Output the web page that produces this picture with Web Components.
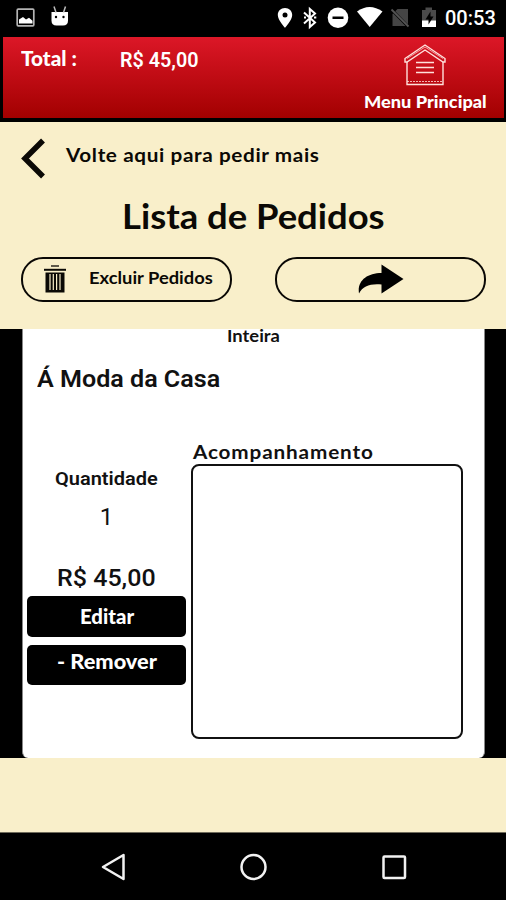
<!DOCTYPE html>
<html lang="pt-BR">
<head>
<meta charset="utf-8">
<title>Lista de Pedidos</title>
<style>
html, body {
    margin: 0;
    height: 100%;
    background: #000;
    overflow: hidden;
}
</style>
</head>
<body>
<pedidos-app></pedidos-app>

<script>
function make_shadow(el, html){
    const tpl = document.createElement("template");
    tpl.innerHTML = html;
    const shadow = el.attachShadow({mode:"open"});
    shadow.appendChild(tpl.content.cloneNode(true));
    return shadow;
}

// text label that fills "width": part by stretching, the rest by letter spacing
customElements.define("fit-label", class FitLabel extends HTMLElement {
    constructor(){
        super();
        this.shadow = make_shadow(this, `
            <style>
            :host {
                display: block;
                font-family: Lato, "Liberation Sans", sans-serif;
                font-weight: 700;
                white-space: nowrap;
            }
            :host([roboto]) { font-family: Roboto, "Liberation Sans", sans-serif; font-weight: 500; }
            :host([heavy]) { font-weight: 900; }
            span { display: inline-block; vertical-align: top; transform-origin: 0 50%; }
            </style>
            <span><slot></slot></span>
        `);
    }

    connectedCallback(){
        const span = this.shadow.querySelector("span");
        const width = parseFloat(this.getAttribute("width"));
        this.style.fontSize = this.getAttribute("size") + "px";
        this.style.lineHeight = this.getAttribute("line") + "px";
        if(!width) return;
        const natural = span.offsetWidth;
        const scale = Math.min(1.09, Math.max(0.94, width / natural));
        const count = this.textContent.length - 1;
        const spacing = (width / scale - natural) / count;
        span.style.letterSpacing = spacing + "px";
        span.style.width = width + "px";
        span.style.transform = `scaleX(${scale})`;
    }
});

customElements.define("status-bar", class StatusBar extends HTMLElement {
    constructor(){
        super();
        make_shadow(this, `
            <style>
            :host {
                display: flex;
                justify-content: space-between;
                height: 37px;
                background: #000;
                color: #fff;
            }
            .clock { margin: 6px 0 0 4px; }
            div { display: flex; }
            .right { padding-right: 10px; }
            svg { display: block; }
            </style>
            <svg width="80" height="37" viewBox="0 0 80 37">
                <rect x="17.2" y="9.2" width="16.6" height="16.6" rx="1" fill="none" stroke="#b4b4b4" stroke-width="1.7"/>
                <path d="M19 23.5v-4l4-2.5 3 2.5 3-1.7 3.500 3v2.700z" fill="#fff"/>
                <path d="M51.500 12h16.500v8.500q0 5-5 5h-6.500q-5 0-5-5z" fill="#fff"/>
                <path d="M54 6.500l2 6M65.500 6.500l-2 6" stroke="#bbb" stroke-width="1.500"/>
                <circle cx="56" cy="17" r="1.200"/><circle cx="63.500" cy="17" r="1.200"/>
            </svg>
            <div class="right">
                <svg width="165" height="37" viewBox="276 0 165 37">
                    <path d="M285 8c-4.200 0-7.200 3-7.200 7 0 5.200 7.200 12.800 7.200 12.800s7.200-7.600 7.200-12.800c0-4-3-7-7.200-7z" fill="#fff"/>
                    <circle cx="285" cy="15" r="2.500"/>
                    <path d="M304 12.500l11 10-5.200 4.500v-18l5.200 4.500-11 10" fill="none" stroke="#fff" stroke-width="2"/>
                    <path d="M304 17.500h2M314 17.500h2.300" stroke="#fff" stroke-width="2"/>
                    <circle cx="338" cy="17.800" r="10.300" fill="#fff"/>
                    <rect x="332.500" y="16.500" width="11" height="2.500"/>
                    <path d="M357 11.500q12.500-9 25.500 0L369.700 27z" fill="#fff"/>
                    <path d="M397.500 9H408v17h-15.500V14z" fill="#454545"/>
                    <path d="M390.500 8.500l18 18.500" stroke="#000" stroke-width="3"/>
                    <path d="M391.500 9.500l17 17" stroke="#555" stroke-width="1.800"/>
                    <path d="M425.500 7.500h6.500v2.500h4v17h-14V10h3.500z" fill="#4a4a4a"/>
                    <path d="M422 20.500h14V27h-14z" fill="#fff"/>
                    <path d="M430.500 11.500l-5 8h3v5l5-8h-3z"/>
                </svg>
                <fit-label class="clock" roboto size="20" line="24" width="51">00:53</fit-label>
            </div>
        `);
    }
});

customElements.define("total-header", class TotalHeader extends HTMLElement {
    constructor(){
        super();
        make_shadow(this, `
            <style>
            :host {
                display: grid;
                grid-template-columns: 98px 1fr 124px;
                box-sizing: border-box;
                height: 81px;
                margin: 0 2px 4px 3px;
                padding: 0 17px 0 18px;
                color: #fff;
                background: linear-gradient(#dc1727, #a20000);
            }
            .total { padding-top: 8.500px; }
            .value { padding: 11px 0 0 1px; font-weight: 600; }
            .menu { display: flex; flex-direction: column; align-items: center; padding-top: 6px; }
            .menu fit-label { margin-top: 4.500px; }
            svg { display: block; }
            </style>
            <fit-label class="total" heavy size="20" line="24" width="56">Total :</fit-label>
            <fit-label class="value" roboto size="20" line="24" width="79">${this.getAttribute("total")}</fit-label>
            <div class="menu">
                <svg width="42" height="44" viewBox="0 0 42 44" fill="none" stroke="#ffe1dc" stroke-width="1.400">
                    <path d="M1 15.500L21 2l20 13.500v3.500h-2L21 7 3 19H1z"/>
                    <path d="M3 15.500L21 4l18 11.500" stroke-width=".7"/>
                    <path d="M3 19v22.500h36V19"/>
                    <path d="M3 38.500h36" stroke-dasharray="2 1" stroke-width=".8"/>
                    <path d="M12 19.500h18M12 24.500h18M12 29.500h18" stroke-width="1.600"/>
                </svg>
                <fit-label heavy size="17" line="20" width="123">Menu Principal</fit-label>
            </div>
        `);
    }
});

customElements.define("pill-button", class PillButton extends HTMLElement {
    constructor(){
        super();
        make_shadow(this, `
            <style>
            :host {
                display: flex;
                align-items: center;
                justify-content: center;
                box-sizing: border-box;
                width: 211px;
                height: 45px;
                border: 2.300px solid #0a0805;
                border-radius: 22px;
                cursor: pointer;
            }
            </style>
            <slot></slot>
        `);
    }
});

customElements.define("pedidos-top", class PedidosTop extends HTMLElement {
    constructor(){
        super();
        make_shadow(this, `
            <style>
            :host {
                display: block;
                box-sizing: border-box;
                height: 207px;
                padding: 16px 20px 0 21px;
                background: #f9efca;
                color: #0b0905;
            }
            .back { display: flex; gap: 20.500px; height: 42px; }
            .back fit-label { padding-top: 5px; }
            .title { display: flex; justify-content: center; margin: 15.500px 0 0 0; }
            .buttons { display: flex; justify-content: space-between; margin-top: 21px; }
            .trash { margin: 0 23px 0 3px; }
            .excluir { margin-top: -3px; }
            svg { display: block; }
            </style>
            <div class="back">
                <svg width="24" height="42" viewBox="0 0 24 42">
                    <path d="M22 2.500L4 20.500l18 18" fill="none" stroke="#0b0905" stroke-width="5.500"/>
                </svg>
                <fit-label size="19" line="24" width="253">Volte aqui para pedir mais</fit-label>
            </div>
            <div class="title"><fit-label size="33.500" line="40" width="263">Lista de Pedidos</fit-label></div>
            <div class="buttons">
                <pill-button>
                    <svg class="trash" width="22" height="29" viewBox="0 0 22 29">
                        <path d="M7 1h8" stroke="#0b0905" stroke-width="1.300"/>
                        <path d="M0 4.800h22" stroke="#0b0905" stroke-width="2"/>
                        <path d="M1.500 7.500h19v20h-19z" fill="#0b0905"/>
                        <path d="M6 9v16M9.300 9v16M12.600 9v16M16 9v16" stroke="#f9efca" stroke-width="1.200"/>
                    </svg>
                    <fit-label class="excluir" size="17" line="20" width="124">Excluir Pedidos</fit-label>
                </pill-button>
                <pill-button>
                    <svg width="46" height="30" viewBox="0 0 46 30">
                        <path d="M23.500 0.500L45.500 15 23.500 29.500V20.500C12 19.500 5 22 1 29.500-1 17 9 9 23.500 9z" fill="#000"/>
                    </svg>
                </pill-button>
            </div>
        `);
    }
});

customElements.define("black-button", class BlackButton extends HTMLElement {
    constructor(){
        super();
        make_shadow(this, `
            <style>
            :host {
                display: flex;
                justify-content: center;
                box-sizing: border-box;
                height: 40.500px;
                border-radius: 5px;
                background: #000;
                color: #fff;
                cursor: pointer;
            }
            </style>
            <slot></slot>
        `);
    }
});

customElements.define("pedido-card", class PedidoCard extends HTMLElement {
    constructor(){
        super();
        make_shadow(this, `
            <style>
            :host {
                display: block;
                box-sizing: border-box;
                height: 429px;
                margin: 0 21px 0 22px;
                padding: 0 21px 0 4px;
                border: solid #888;
                border-width: 0 1px;
                border-radius: 0 0 6px 6px;
                background: #fff;
                color: #111;
            }
            .tamanho { display: flex; justify-content: center; padding-left: 17px; }
            .nome { margin: 23px 0 0 10px; font-weight: 600; }
            .cols { display: grid; grid-template-columns: 159px 272px; column-gap: 5px; margin-top: 47px; }
            .left { display: flex; flex-direction: column; padding-top: 27px; }
            .left > fit-label { align-self: center; }
            .qtd { margin-top: 11.500px; font-weight: 400; }
            .preco { margin-top: 33px; }
            .editar { margin-top: 4.500px; }
            .editar fit-label { padding-top: 8px; }
            .remover { margin-top: 8px; }
            .remover fit-label { padding-top: 4.500px; }
            .box {
                box-sizing: border-box;
                height: 275px;
                border: 2.300px solid #111;
                border-radius: 8px;
            }
            .acomp { margin-left: 1.500px; }
            </style>
            <div class="tamanho"><fit-label size="17" line="13" width="53">Inteira</fit-label></div>
            <fit-label class="nome" roboto size="24" line="28" width="183">${this.getAttribute("nome")}</fit-label>
            <div class="cols">
                <div class="left">
                    <fit-label roboto size="19" line="24" width="103" style="font-weight:600">Quantidade</fit-label>
                    <fit-label class="qtd" roboto size="24" line="28">1</fit-label>
                    <fit-label class="preco" roboto size="24" line="28" width="99">${this.getAttribute("preco")}</fit-label>
                    <black-button class="editar"><fit-label heavy size="20" line="24" width="54">Editar</fit-label></black-button>
                    <black-button class="remover"><fit-label heavy size="20" line="24" width="100">- Remover</fit-label></black-button>
                </div>
                <div>
                    <fit-label class="acomp" size="19" line="24" width="180">Acompanhamento</fit-label>
                    <div class="box"></div>
                </div>
            </div>
        `);
    }
});

customElements.define("nav-bar", class NavBar extends HTMLElement {
    constructor(){
        super();
        make_shadow(this, `
            <style>
            :host {
                display: flex;
                align-items: center;
                justify-content: space-between;
                box-sizing: border-box;
                height: 68px;
                padding: 0 98px;
                border-top: 1px solid #6f6b5b;
                background: #000;
            }
            svg { display: block; fill: none; stroke: #f2f2f2; stroke-width: 2.500; }
            </style>
            <svg width="30" height="30" viewBox="0 0 30 30"><path d="M25.500 3v24L5 15z" stroke-linejoin="round"/></svg>
            <svg width="30" height="30" viewBox="0 0 30 30"><circle cx="15.500" cy="15" r="12"/></svg>
            <svg width="30" height="30" viewBox="0 0 30 30"><rect x="5.500" y="4.500" width="21.500" height="21.500" rx="1"/></svg>
        `);
    }
});

customElements.define("pedidos-app", class PedidosApp extends HTMLElement {
    constructor(){
        super();
        make_shadow(this, `
            <style>
            :host {
                display: grid;
                grid-template-rows: 37px 85px 207px 429px 74px 68px;
                height: 900px;
                background: #000;
            }
            .footer { background: #f9efca; }
            </style>
            <status-bar></status-bar>
            <total-header total="R$ 45,00"></total-header>
            <pedidos-top></pedidos-top>
            <pedido-card nome="Á Moda da Casa" preco="R$ 45,00"></pedido-card>
            <div class="footer"></div>
            <nav-bar></nav-bar>
        `);
    }
});
</script>
</body>
</html>
